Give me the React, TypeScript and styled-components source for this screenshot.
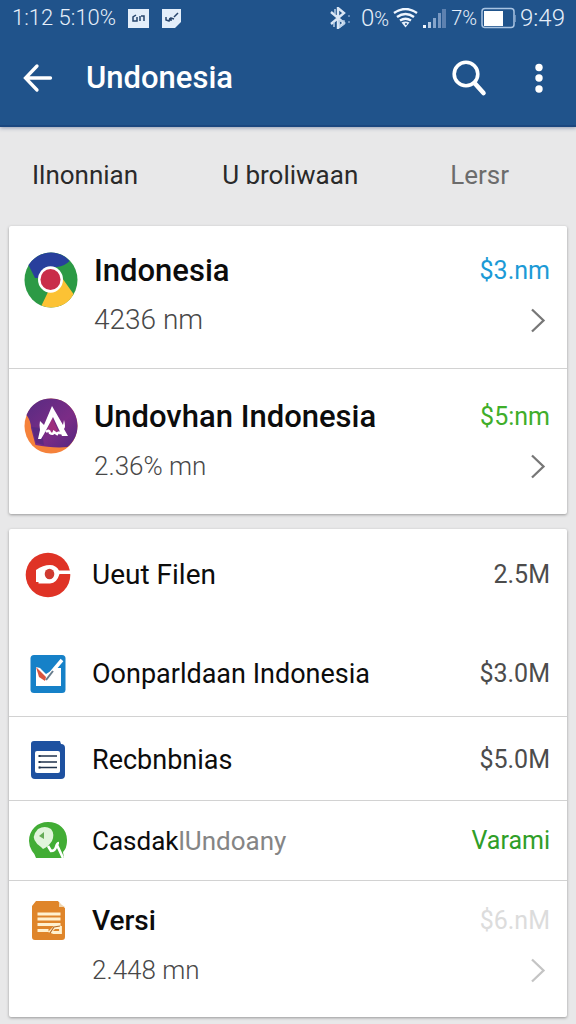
import React from "react";
import styled, { createGlobalStyle } from "styled-components";

const GlobalStyle = createGlobalStyle`
  *, *::before, *::after { box-sizing: border-box; }
  body {
    margin: 0;
    background: #e8e8e9;
    color: #0c0c0c;
    font-family: Roboto, "Liberation Sans", sans-serif;
  }
`;

const Header = styled.header`
  background: #20538b;
  color: #fff;
  border-bottom: 2px solid #1b477f;
  box-shadow: 0 1px 4px rgba(40, 60, 110, 0.45);
`;

const StatusBar = styled.div`
  display: flex;
  align-items: center;
  justify-content: space-between;
  height: 36px;
  padding: 0 11px 0 12px;
  color: #e6effa;
  font-weight: 300;
  line-height: 36px;
`;

const StatusGroup = styled.div<{ $gap: number }>`
  display: flex;
  align-items: center;
  gap: ${(p) => p.$gap}px;
  white-space: nowrap;
`;

const StatusText = styled.span<{ $size?: number }>`
  font-size: ${(p) => p.$size ?? 24}px;
`;

const Toolbar = styled.div`
  display: flex;
  align-items: center;
  height: 84px;
  padding: 0 20px 0 18px;
  margin-bottom: 5px;
`;

const IconButton = styled.button<{ $width: number }>`
  display: flex;
  align-items: center;
  justify-content: center;
  width: ${(p) => p.$width}px;
  height: 48px;
  padding: 0;
  border: 0;
  background: none;
  cursor: pointer;
`;

const Actions = styled.div`
  display: flex;
  gap: 21px;
`;

const PageTitle = styled.h1`
  flex: 1;
  margin: 0 0 0 28px;
  font-size: 31px;
  font-weight: 500;
  line-height: 40px;
`;

const Tabs = styled.nav`
  display: flex;
  gap: 84px;
  height: 99px;
  padding: 0 67px 0 32px;
`;

const Tab = styled.button<{ $muted?: boolean }>`
  height: 96px;
  padding: 0;
  border: 0;
  background: none;
  font-family: inherit;
  font-size: 26px;
  line-height: 32px;
  color: ${(p) => (p.$muted ? "#6c6c6c" : "#2a2a2a")};
  cursor: pointer;

  &:last-child { margin-left: auto; }
`;

const Content = styled.main`
  display: flex;
  flex-direction: column;
  gap: 15px;
  padding: 0 9px 7px;
`;

const Card = styled.ul`
  list-style: none;
  margin: 0;
  padding: 0;
  background: #fff;
  border-radius: 2px;
  box-shadow: 0 1px 3px rgba(0, 0, 0, 0.35);
`;

const Item = styled.li<{ $divider?: boolean }>`
  border-bottom: ${(p) => (p.$divider ? "1px solid #d2d2d2" : "0")};
`;

const RowLink = styled.a<{ $top: number; $bottom: number; $wide?: boolean }>`
  display: grid;
  grid-template-columns: ${(p) => (p.$wide ? "54px" : "48px")} 1fr auto;
  column-gap: ${(p) => (p.$wide ? 16 : 20)}px;
  padding: ${(p) => p.$top}px 17px ${(p) => p.$bottom}px 15px;
  color: inherit;
  text-decoration: none;
`;

const RowIcon = styled.span<{ $wide?: boolean }>`
  display: flex;
  justify-content: center;
  align-items: center;
  height: ${(p) => (p.$wide ? 58 : 40)}px;
`;

const Lines = styled.span<{ $end?: boolean }>`
  display: flex;
  flex-direction: column;
  align-items: ${(p) => (p.$end ? "flex-end" : "flex-start")};
  gap: 9px;
  white-space: nowrap;
`;

const Name = styled.span<{ $size: number; $weight?: number }>`
  font-size: ${(p) => p.$size}px;
  font-weight: ${(p) => p.$weight ?? 400};
  line-height: 40px;
`;

const Faded = styled.span`
  color: #858585;
`;

const Detail = styled.span<{ $size: number }>`
  font-size: ${(p) => p.$size}px;
  font-weight: 300;
  line-height: 40px;
  color: #484848;
`;

const Price = styled.span<{ $color: string }>`
  font-size: 25px;
  line-height: 40px;
  color: ${(p) => p.$color};
`;

const ChevronBox = styled.span`
  display: flex;
  align-items: center;
  height: 40px;
  padding-right: 3px;
`;

const Chevron = ({ color }: { color: string }) => (
  <ChevronBox>
    <svg width="18" height="26" viewBox="0 0 18 26" fill="none" aria-hidden="true">
      <path d="M3 2.5 14.500 13.500 3 24.500" stroke={color} strokeWidth="2.300" />
    </svg>
  </ChevronBox>
);

const BadgeIcon = ({ folded }: { folded?: boolean }) => (
  <svg width="21" height="19" viewBox="0 0 21 19" fill="none" aria-hidden="true">
    <path d={folded ? "M1 0h19v13l-6 6H1z" : "M0 0h21v19H0z"} fill="#e3eefa" />
    {folded ? (
      <path d="M5 8v3l3 1 1-3m1 3V9l3 1M13 8l4-4" stroke="#27456c" strokeWidth="1.500" />
    ) : (
      <path d="M8 6 5 8v4h4V8m3 4V7m1 0h3v5" stroke="#27456c" strokeWidth="1.500" />
    )}
  </svg>
);

const BluetoothIcon = () => (
  <svg width="21" height="22" viewBox="0 0 21 22" fill="none" aria-hidden="true">
    <path d="M1 5 14 16 8 21V1l6 5L1 17" stroke="#dbe7f5" strokeWidth="2.400" />
    <path d="M5 2v5M4 15v5M9 14h5v3l-4 3z" stroke="#b9cfe8" strokeWidth="1.500" />
    <path d="M19 8v2m0 4v2" stroke="#7d9fc8" strokeWidth="1.500" />
  </svg>
);

const WifiIcon = () => (
  <svg width="25" height="20" viewBox="0 0 25 20" fill="none" aria-hidden="true">
    <path d="M1 5Q12.500-3 24 5M4 9q8.500-6 17 0M7 12.500q5.500-3.500 11 0" stroke="#eff6ff" strokeWidth="2.400" />
    <path d="M8.500 14.500q4-2 8 0L12.500 19.500z" fill="#e5effa" />
    <path d="M12 16h2" stroke="#20538b" strokeWidth="1.500" />
  </svg>
);

const SignalIcon = () => (
  <svg width="25" height="21" viewBox="0 0 25 21" aria-hidden="true">
    <path d="M1 17h3v3H1z" fill="#f2f7fd" />
    <path d="M6 14h3v6H6z" fill="#b5cae3" />
    <path d="M11 10h3v10h-3z" fill="#86a5cb" />
    <path d="M16 5h3v15h-3z" fill="#7797c1" />
    <path d="M20 1h4v19h-4z" fill="#5d81b0" />
  </svg>
);

const BatteryIcon = () => (
  <svg width="35" height="22" viewBox="0 0 35 22" fill="none" aria-hidden="true">
    <rect x="1" y="1.500" width="32" height="19" rx="3" stroke="#a9c4e2" strokeWidth="1.500" />
    <path d="M3 4h19v15H3z" fill="#fff" />
    <path d="M34.200 8v7" stroke="#8cabd0" />
  </svg>
);

const BackIcon = () => (
  <svg width="30" height="30" viewBox="0 0 30 30" fill="none" stroke="#fff" strokeWidth="3.300" strokeLinecap="round" aria-hidden="true">
    <path d="M14 3 2.500 15 14 27M3 15h24.500" />
  </svg>
);

const SearchIcon = () => (
  <svg width="38" height="38" viewBox="0 0 38 38" fill="none" stroke="#fff" aria-hidden="true">
    <circle cx="16" cy="15" r="11.800" strokeWidth="3.600" />
    <path d="m24.500 24 9 10" strokeWidth="4.600" strokeLinecap="round" />
  </svg>
);

const MoreIcon = () => (
  <svg width="10" height="32" viewBox="0 0 10 32" fill="#fff" aria-hidden="true">
    <circle cx="5" cy="5.500" r="3.700" />
    <circle cx="5" cy="16" r="3.700" />
    <circle cx="5" cy="27" r="3.700" />
  </svg>
);

const BrowserIcon = () => (
  <svg width="54" height="56" viewBox="0 0 54 56" aria-hidden="true">
    <ellipse cx="27" cy="28" rx="26.500" ry="27.500" fill="#2c9a45" />
    <path d="M4.500 13C10 5 18 .5 27 .5c7 0 14 3 18.500 8.500Q41 14 33 15h-8c-5 1-8 5-9 11h-5Q8 20 4.500 13z" fill="#283f9c" />
    <path d="m36 23 13.500 19C45 51 36 55.500 27 55.500q-5 0-9.500-2L24 40c8 1 14-7 12-17z" fill="#fcc234" />
    <ellipse cx="26.500" cy="27.500" rx="12.500" ry="13.200" fill="#fff" />
    <ellipse cx="26.500" cy="27.500" rx="10" ry="10.500" fill="#c92d49" />
  </svg>
);

const LetterIcon = () => (
  <svg width="54" height="56" viewBox="0 0 54 56" aria-hidden="true">
    <defs>
      <linearGradient id="violet" x1="0" y1="0" x2="1" y2="1">
        <stop offset="0" stopColor="#572b82" />
        <stop offset="0.600" stopColor="#7b2c86" />
        <stop offset="1" stopColor="#542680" />
      </linearGradient>
    </defs>
    <ellipse cx="27" cy="28" rx="26.500" ry="27.500" fill="#f5823b" />
    <path d="M2.500 17C7 6 16 .5 27 .5c15 0 26.500 12 26.500 27.500 0 9-4 16-10 21-10 1-21 0-32-2L7 30q0-7-4.500-13z" fill="url(#violet)" />
    <path d="M8 29q2 8 4 16l8 2-3-17z" fill="#4b287e" opacity="0.600" />
    <path d="m28 19-5 14q6 4 11 0z" fill="#b93078" opacity="0.600" />
    <path d="M28 8 39 27l1-5q2 7 0 9l4 7h-6l-9-19-9 17-3 5h-3l2-9q-1-5 0-9l4 4z" fill="#fff" />
    <path d="M22 34q3-3 4 1 3 2 4-1l3 2q2-3 4 0" fill="none" stroke="#fff" strokeWidth="2.600" />
  </svg>
);

const CameraIcon = () => (
  <svg width="46" height="46" viewBox="0 0 46 46" aria-hidden="true">
    <circle cx="23" cy="23" r="22.300" fill="#df3326" />
    <path d="M11 18q7-5 14-5 6 0 9 5.500h12v3.500H34.500Q32 31 25 31.500H13.500V30H11z" fill="#fff" />
    <ellipse cx="24.500" cy="22" rx="4.800" ry="5.300" fill="#cf3a30" />
  </svg>
);

const CheckIcon = () => (
  <svg width="36" height="40" viewBox="0 0 36 40" aria-hidden="true">
    <rect x="0.500" y="1" width="35" height="38" rx="3.500" fill="#1681c8" />
    <path d="m6 13 4 1 6 6 10-6h5v18H6z" fill="#fff" />
    <path d="m12 21 4 4L32 6" fill="none" stroke="#fff" strokeWidth="3.500" />
    <path d="m16 26 7-9" stroke="#687c8c" strokeWidth="2" />
    <path d="m6 13 6 6 4 4-1 4-6-4z" fill="#d8543f" />
  </svg>
);

const NoteIcon = () => (
  <svg width="36" height="40" viewBox="0 0 36 40" aria-hidden="true">
    <path d="M4 1h26l1 3q4 0 4 4v27q0 4-4 4H5q-4 0-4-4V4q0-3 3-3z" fill="#1e51a0" />
    <rect x="5" y="11" width="25" height="22" rx="2" fill="#fff" />
    <path d="M9 16h18M9 22h18M9 27.500h18" stroke="#20334d" strokeWidth="1.500" />
    <path d="M8.500 15h2v2h-2zm0 6h2v2h-2zm0 5.500h2v2h-2z" fill="#20334d" />
  </svg>
);

const ChatIcon = () => (
  <svg width="40" height="40" viewBox="0 0 40 40" aria-hidden="true">
    <path d="M20 1c11 0 19 7 19 18 0 7-2 10-4 12l1 6H8q-1-4-4-7-3-5-3-10C1 9 9 1 20 1z" fill="#42ad35" />
    <path d="M10 8q7-4 13 0 4 5 1 12-4 6-9 8l-2-2Q3 19 7 12z" fill="#e1f5db" />
    <path d="m11 15 5-4v7z" fill="#65ac56" />
    <path d="m20 25 3 5q4 0 5-4 1-4 3-4M29 24l6 13" fill="none" stroke="#fff" strokeWidth="2.600" />
  </svg>
);

const DocumentIcon = () => (
  <svg width="36" height="42" viewBox="0 0 36 42" aria-hidden="true">
    <path d="M6 1h22l3 4 4 3v29q0 3-3 3H5q-3 0-3-3V6z" fill="#df852a" />
    <path d="M29 2v5h6l-3-2z" fill="#efd4ae" />
    <path d="M7.500 14h23M7.500 19h23M7.500 24.500h23M7.500 30.500h11m2 1 4-4h6v5h-7z" fill="none" stroke="#fff1cf" strokeWidth="2.800" />
    <path d="m20 33 4-6 6-1" fill="none" stroke="#b36b28" strokeWidth="1.200" />
  </svg>
);

type RowProps = {
  icon: React.ReactNode;
  name: React.ReactNode;
  size?: number;
  weight?: number;
  price: string;
  priceColor?: string;
  detail?: string;
  detailSize?: number;
  chevron?: string;
  top: number;
  bottom: number;
  wide?: boolean;
  divider?: boolean;
};

const Row = ({ icon, name, size = 27, weight, price, priceColor = "#4c4c4c", detail, detailSize = 26, chevron, top, bottom, wide, divider }: RowProps) => (
  <Item $divider={divider}>
    <RowLink href="#" $top={top} $bottom={bottom} $wide={wide}>
      <RowIcon $wide={wide}>{icon}</RowIcon>
      <Lines>
        <Name $size={size} $weight={weight}>{name}</Name>
        {detail && <Detail $size={detailSize}>{detail}</Detail>}
      </Lines>
      <Lines $end>
        <Price $color={priceColor}>{price}</Price>
        {chevron && <Chevron color={chevron} />}
      </Lines>
    </RowLink>
  </Item>
);

export default function App() {
  return (
    <>
      <GlobalStyle />
      <Header>
        <StatusBar>
          <StatusGroup $gap={12}>
            <StatusText $size={22}>1:12 5:10%</StatusText>
            <BadgeIcon />
            <BadgeIcon folded />
          </StatusGroup>
          <StatusGroup $gap={4}>
            <BluetoothIcon />
            <StatusText>&nbsp;0<StatusText $size={20}>%</StatusText></StatusText>
            <WifiIcon />
            <SignalIcon />
            <StatusText $size={20}>7%</StatusText>
            <BatteryIcon />
            <StatusText>9:49</StatusText>
          </StatusGroup>
        </StatusBar>
        <Toolbar>
          <IconButton $width={40} aria-label="Back"><BackIcon /></IconButton>
          <PageTitle>Undonesia</PageTitle>
          <Actions>
            <IconButton $width={64} aria-label="Search"><SearchIcon /></IconButton>
            <IconButton $width={34} aria-label="More options"><MoreIcon /></IconButton>
          </Actions>
        </Toolbar>
      </Header>
      <Tabs aria-label="Sections">
        <Tab>Ilnonnian</Tab>
        <Tab>U broliwaan</Tab>
        <Tab $muted>Lersr</Tab>
      </Tabs>
      <Content>
        <Card>
          <Row wide divider icon={<BrowserIcon />} name="Indonesia" size={31} weight={500} price="$3.nm" priceColor="#1c9ad6" detail="4236 nm" detailSize={28} chevron="#777" top={25} bottom={28} />
          <Row wide icon={<LetterIcon />} name="Undovhan Indonesia" size={31} weight={500} price="$5:nm" priceColor="#3fae2a" detail="2.36% mn" chevron="#777" top={28} bottom={28} />
        </Card>
        <Card>
          <Row icon={<CameraIcon />} name="Ueut Filen" size={28} price="2.5M" top={26} bottom={34} />
          <Row divider icon={<CheckIcon />} name="Oonparldaan Indonesia" price="$3.0M" top={25} bottom={22} />
          <Row divider icon={<NoteIcon />} name="Recbnbnias" price="$5.0M" top={23} bottom={20} />
          <Row divider icon={<ChatIcon />} name={<>Casdak<Faded>lUndoany</Faded></>} size={26} price="Varami" priceColor="#2f9e28" top={20} bottom={19} />
          <Row icon={<DocumentIcon />} name="Versi" size={28} weight={500} price="$6.nM" priceColor="#dcdcdc" detail="2.448 mn" chevron="#c4c4c4" top={20} bottom={27} />
        </Card>
      </Content>
    </>
  );
}
